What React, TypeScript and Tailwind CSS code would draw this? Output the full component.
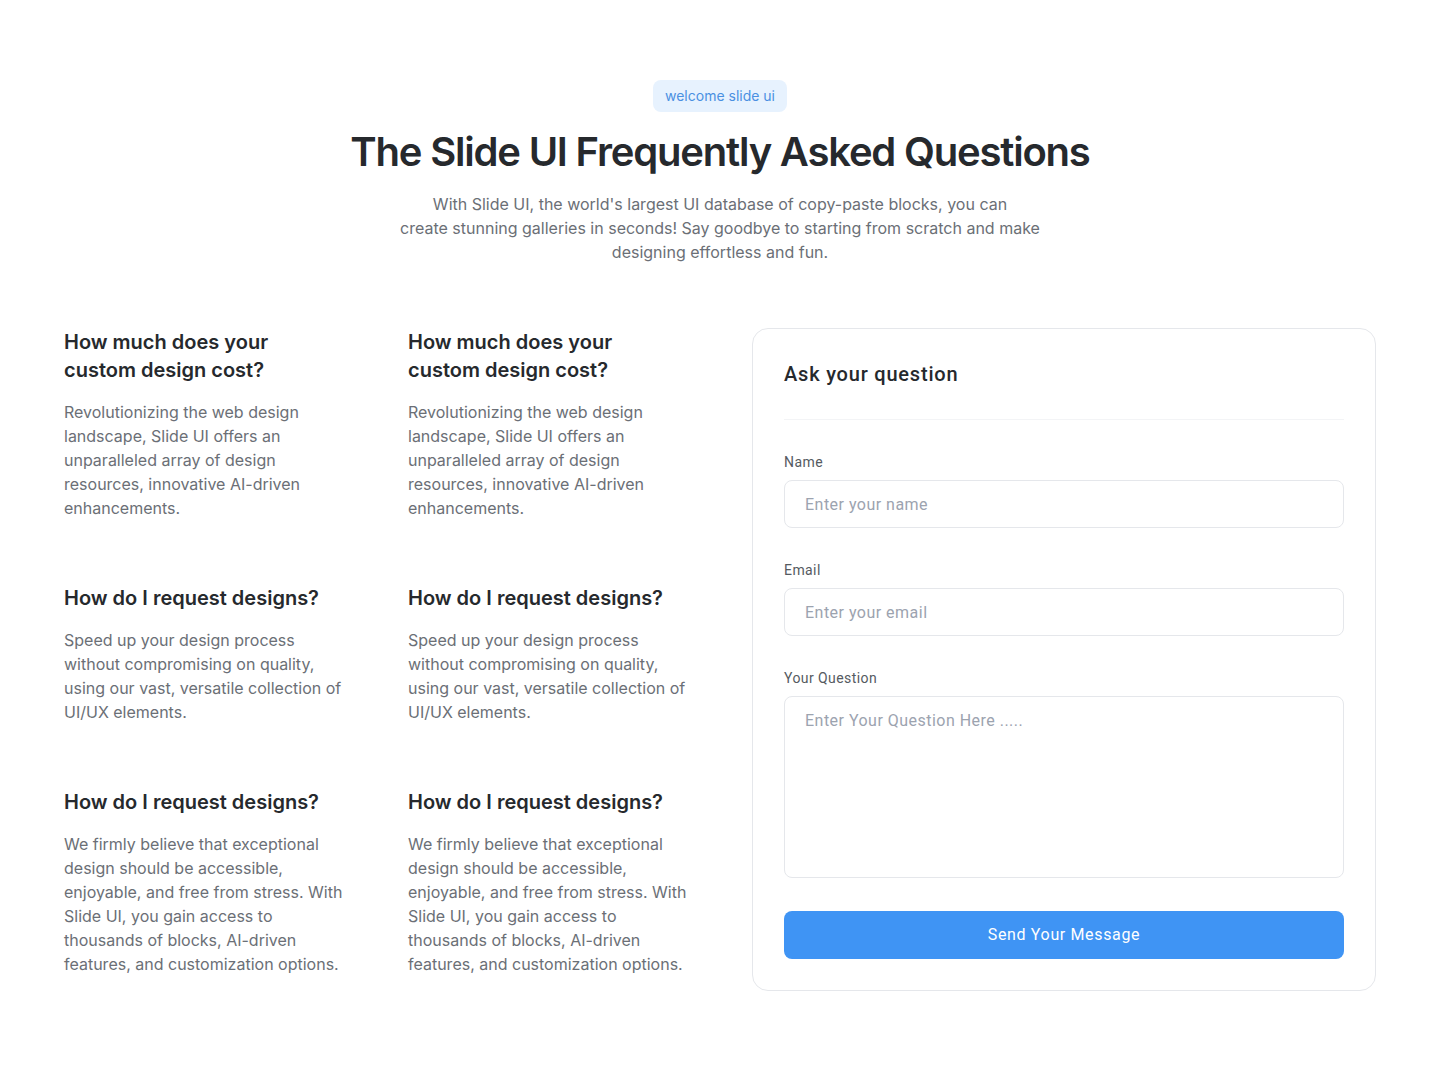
import React from 'react';

const faqs = [
  {
    q: 'How much does your custom design cost?',
    a: 'Revolutionizing the web design landscape, Slide UI offers an unparalleled array of design resources, innovative AI-driven enhancements.',
  },
  {
    q: 'How much does your custom design cost?',
    a: 'Revolutionizing the web design landscape, Slide UI offers an unparalleled array of design resources, innovative AI-driven enhancements.',
  },
  {
    q: 'How do I request designs?',
    a: 'Speed up your design process without compromising on quality, using our vast, versatile collection of UI/UX elements.',
  },
  {
    q: 'How do I request designs?',
    a: 'Speed up your design process without compromising on quality, using our vast, versatile collection of UI/UX elements.',
  },
  {
    q: 'How do I request designs?',
    a: 'We firmly believe that exceptional design should be accessible, enjoyable, and free from stress. With Slide UI, you gain access to thousands of blocks, AI-driven features, and customization options.',
  },
  {
    q: 'How do I request designs?',
    a: 'We firmly believe that exceptional design should be accessible, enjoyable, and free from stress. With Slide UI, you gain access to thousands of blocks, AI-driven features, and customization options.',
  },
];

// form fields share the same look
const inputClass =
  'block w-full h-12 px-5 border border-gray-200 rounded-lg bg-white text-base tracking-[0.03em] text-gray-800 placeholder-[#9ca3af] focus:outline-none';

const labelClass = 'block text-sm leading-5 tracking-[0.03em] text-[#555a61] mb-2';

export default function App() {
  return (
    <div className="min-h-screen bg-white font-['Inter',sans-serif] px-16 pt-20 pb-20">
      {/* Header */}
      <div className="flex flex-col items-center text-center">
        <span className="px-3 py-1.5 rounded-lg bg-[#e7f2fe] text-sm leading-5 text-[#4a90e2]">welcome slide ui</span>
        <h1 className="mt-4 text-[40px] leading-[48px] font-semibold tracking-[-0.03em] text-[#26292d]">
          The Slide UI Frequently Asked Questions
        </h1>
        <p className="mt-4 max-w-[640px] text-base leading-6 text-[#6b6f76]">
          With Slide UI, the world's largest UI database of copy-paste blocks, you can
          <br />
          create stunning galleries in seconds! Say goodbye to starting from scratch and make designing effortless and
          fun.
        </p>
      </div>

      {/* Content */}
      <div className="mt-16 grid grid-cols-2 gap-16">
        <div className="grid grid-cols-2 gap-x-16 gap-y-16 content-start">
          {faqs.map((f, i) => (
            <div key={i}>
              <h3 className="text-xl leading-7 font-semibold text-[#26292d]">{f.q}</h3>
              <p className="mt-4 text-base leading-6 text-[#6b6f76]">{f.a}</p>
            </div>
          ))}
        </div>

        <form
          className="self-start border border-gray-200 rounded-2xl px-[31px] pt-[31px] pb-[31px] font-['Roboto',sans-serif]"
          onSubmit={(e) => e.preventDefault()}
        >
          <h2 className="text-xl leading-7 font-medium tracking-[0.04em] text-[#26292d] pb-[31px] border-b border-gray-100">
            Ask your question
          </h2>
          <div className="mt-8">
            <label className={labelClass}>Name</label>
            <input className={inputClass} placeholder="Enter your name" />
          </div>
          <div className="mt-8">
            <label className={labelClass}>Email</label>
            <input className={inputClass} placeholder="Enter your email" />
          </div>
          <div className="mt-8">
            <label className={labelClass}>Your Question</label>
            <textarea
              className="block w-full h-[182px] px-5 py-3 border border-gray-200 rounded-lg bg-white text-base tracking-[0.03em] text-gray-800 placeholder-[#9ca3af] resize-none focus:outline-none"
              placeholder="Enter Your Question Here ....."
            />
          </div>
          <button
            type="submit"
            className="mt-[33px] w-full h-12 rounded-lg bg-[#3f94f4] text-white text-base tracking-[0.04em]"
          >
            Send Your Message
          </button>
        </form>
      </div>
    </div>
  );
}
